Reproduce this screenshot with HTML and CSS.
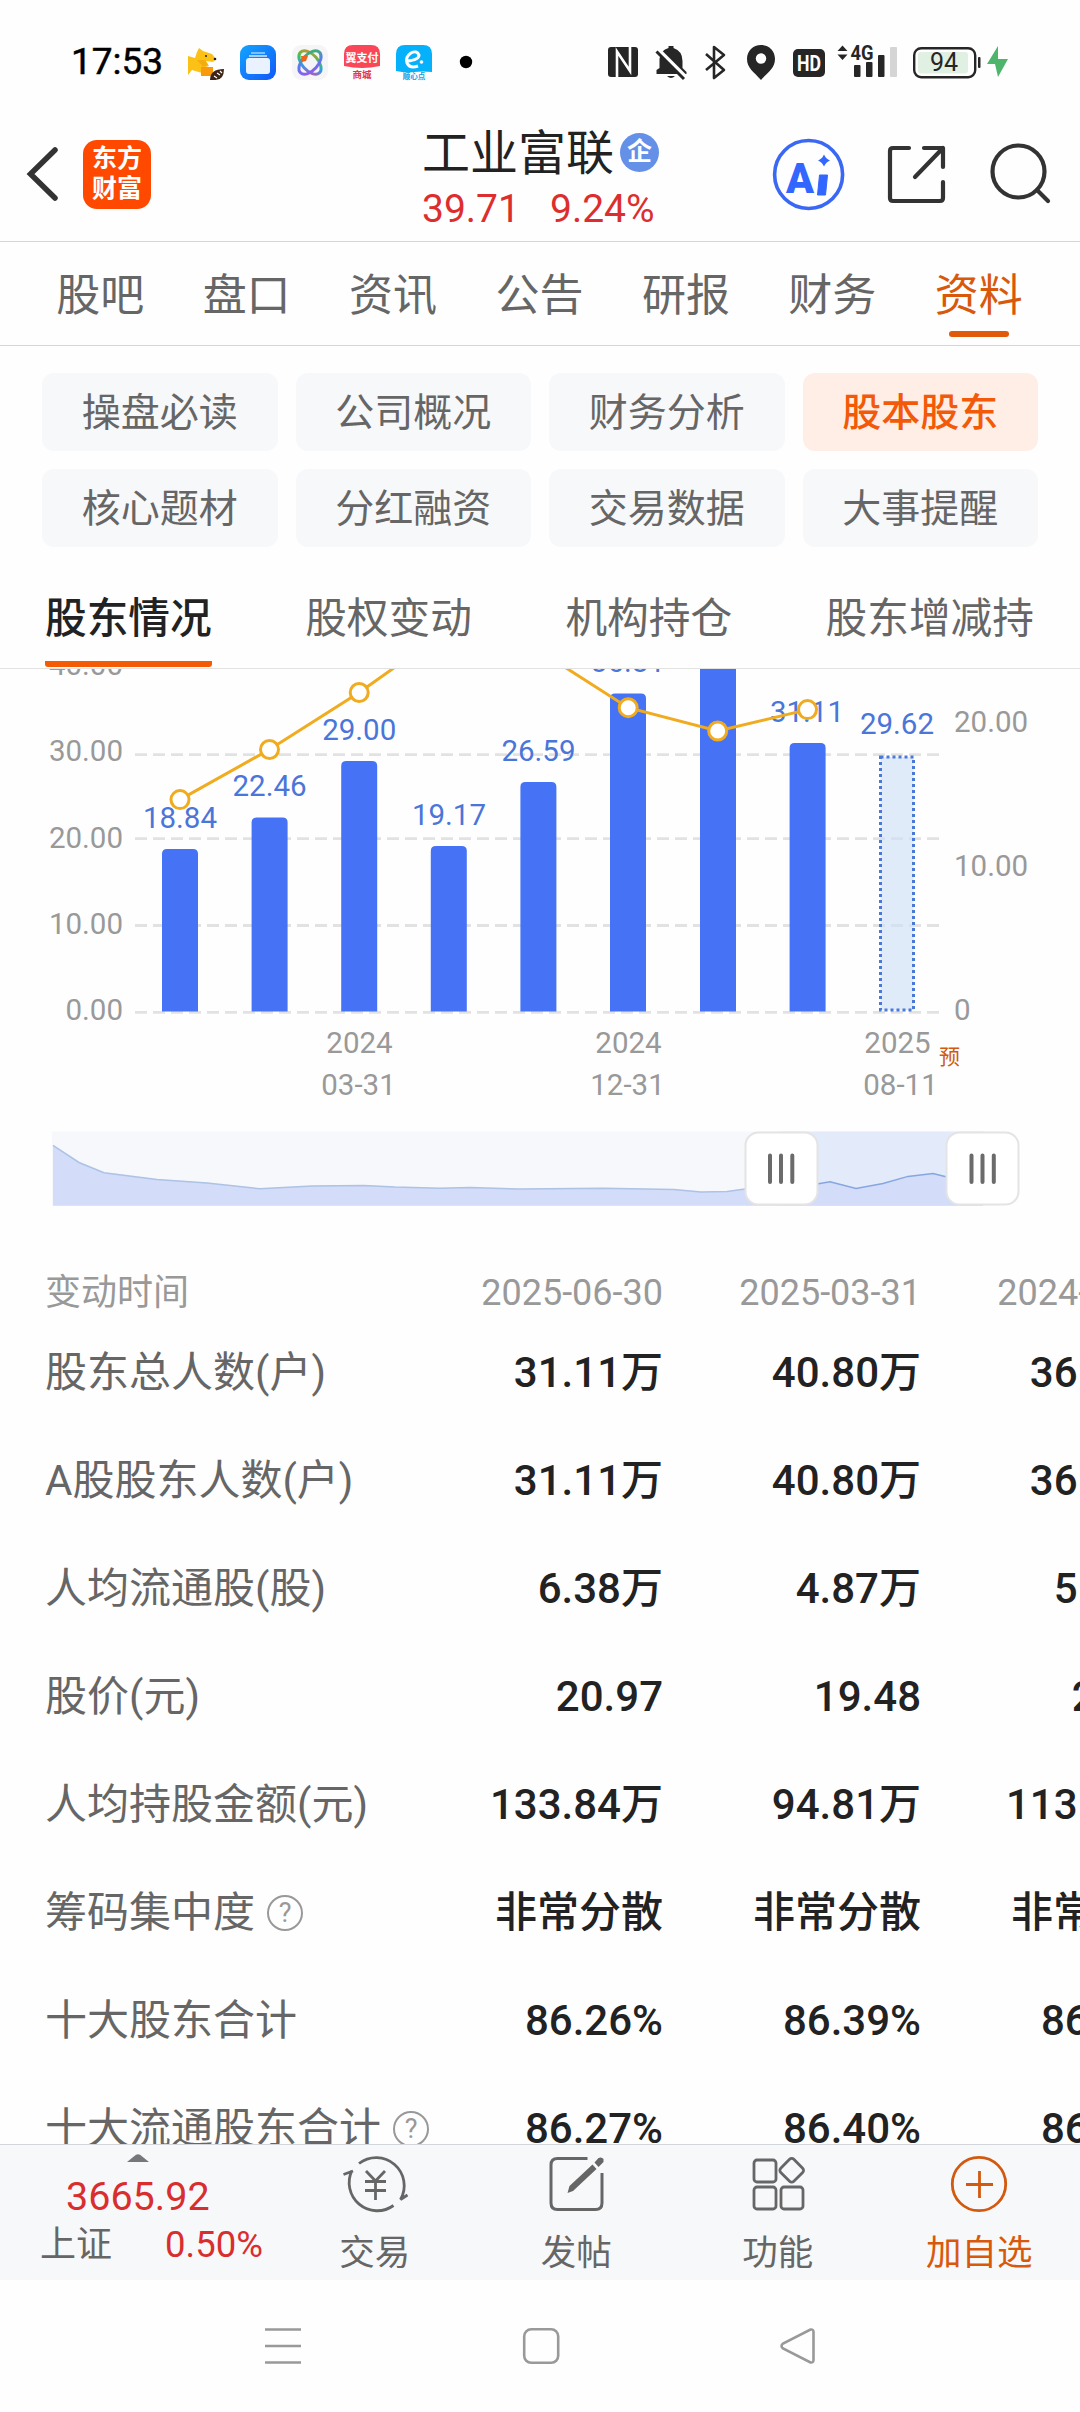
FILE: index.html
```html
<!DOCTYPE html>
<html lang="zh-CN">
<head>
    <meta charset="UTF-8">
    <meta name="viewport" content="width=device-width, initial-scale=1.0">
    <title>工业富联 - 股本股东</title>
    <link rel="stylesheet" href="styles.css">
</head>
<body>
    <div class="status">
        <span class="clock">17:53</span>
        <svg class="apps" width="288" height="40" viewBox="186 42 288 40">
            <defs>
                <linearGradient id="folder" x1="0" y1="0" x2="1" y2="1">
                    <stop offset="0" stop-color="#12a5ff"/><stop offset="1" stop-color="#1257f8"/>
                </linearGradient>
                <linearGradient id="rainbow" x1="0" y1="0" x2="1" y2="1">
                    <stop offset="0" stop-color="#f08a1c"/><stop offset=".4" stop-color="#3cc35a"/><stop offset=".65" stop-color="#2d9df0"/><stop offset="1" stop-color="#e0488c"/>
                </linearGradient>
                <linearGradient id="rainbow2" x1="0" y1="1" x2="1" y2="0">
                    <stop offset="0" stop-color="#a052f0"/><stop offset=".5" stop-color="#5a7af0"/><stop offset="1" stop-color="#38c04c"/>
                </linearGradient>
            </defs>
            <path d="M188 56 L195 58 L197 52 L199 48 L203 51 L212 54 L216 59 L213 62 L206 61 L209 66 L203 68 L202 73 L192 70 L188 75Z" fill="#fbc116"/>
            <path d="M197 60 L205 60 L208 65 L203 67Z" fill="#f5ac10"/>
            <circle cx="206" cy="56" r="1" fill="#222"/><circle cx="215" cy="59" r="1.3" fill="#222"/>
            <path d="M201 67h12v9h-12z" fill="#f99a0c"/>
            <path d="M210 80 Q210 69 224 69 Q224 81 214 80Z" fill="#3d2417"/>
            <path d="M214 76l3 2M217 73l3 2M220 71l2 2" stroke="#fff" stroke-width="1.2"/>
            <rect x="240" y="45" width="36" height="35" rx="9" fill="url(#folder)"/>
            <path d="M251 52h14v2h-14z" fill="#7dc0ff"/><path d="M249 55h18v2h-18z" fill="#a5d0ff"/>
            <rect x="246" y="58" width="24" height="16" rx="3" fill="#eaf2ff"/>
            <rect x="292" y="45" width="36" height="35" rx="9" fill="#f5f5f7"/>
            <g fill="none" stroke-width="3">
                <ellipse cx="310" cy="62.500" rx="14" ry="8" transform="rotate(48 310 62.500)" stroke="url(#rainbow)"/>
                <ellipse cx="310" cy="62.500" rx="14" ry="8" transform="rotate(-48 310 62.500)" stroke="url(#rainbow2)"/>
            </g>
            <path d="M301 56l7 0-2 5-4 1z" fill="#f0641c"/>
            <path d="M353 45h18q9 0 9 9v12q-18 4-36 0v-12q0-9 9-9z" fill="#fb4657"/>
            <text x="362" y="62" class="mini" font-size="11" fill="#fff">翼支付</text>
            <text x="362" y="78" class="mini" font-size="9.500" fill="#e5374a">商城</text>
            <path d="M405 45h18q9 0 9 9v18q-9-1-18 0-9 1-18-1v-17q0-9 9-9z" fill="#06b1fb"/>
            <path d="M407 61 Q419 60 419 55 Q417 50 411 53 Q405 57 407 63 Q410 69 418 66" fill="none" stroke="#fff" stroke-width="3"/>
            <circle cx="421.500" cy="62" r="1.800" fill="#fff"/>
            <text x="414" y="79" class="mini" font-size="7.500" fill="#06a1e8">顺心点</text>
            <circle cx="466" cy="62" r="6.200" fill="#000"/>
        </svg>
        <svg class="sys" width="410" height="40" viewBox="604 42 410 40">
            <g fill="#262626">
                <rect x="608" y="47" width="30" height="30" rx="3"/>
                <path d="M617 77V51.500L630 71V47" fill="none" stroke="#fff" stroke-width="2.600"/>
                <path d="M668.500 46h5v2q9 3 9 13v7l4 4v2h-30v-4l3-2v-9q1-9 9-11z"/>
                <path d="M667 76h8q-4 4-8 0z"/>
                <path d="M657 49L687 79" stroke="#fff" stroke-width="5"/>
                <path d="M656.500 51.500L684 79" stroke="#262626" stroke-width="3"/>
                <path d="M706 54l18 16-10 8V47l10 8-18 15" fill="none" stroke="#262626" stroke-width="2.600" stroke-linejoin="round"/>
                <path d="M761 45c8 0 14 6 14 14 0 9-7 13-14 21-7-8-14-12-14-21 0-8 6-14 14-14z"/>
                <circle cx="761" cy="58.500" r="5.200" fill="#fff"/>
                <rect x="793" y="49" width="32" height="28" rx="5"/>
                <path d="M842.500 45.500l5 5.500h-10zM842.500 60l5-5.500h-10z"/>
                <rect x="854" y="65" width="6.500" height="12" rx="1"/>
                <rect x="866" y="62" width="6.500" height="15" rx="1"/>
                <rect x="878" y="55" width="6.500" height="22" rx="1"/>
                <rect x="890" y="47" width="7" height="30" rx="1" fill="#d5d5d5"/>
                <rect x="978" y="57" width="2.500" height="11" rx="1"/>
            </g>
            <text x="809" y="70.500" class="mini" font-size="22" fill="#fff" textLength="24" lengthAdjust="spacingAndGlyphs">HD</text>
            <text x="862" y="60" class="mini" font-size="20" fill="#262626" textLength="23" lengthAdjust="spacingAndGlyphs">4G</text>
            <rect x="914.200" y="48.200" width="61" height="29" rx="7" fill="#fff" stroke="#262626" stroke-width="2.400"/>
            <rect x="918" y="52" width="50" height="21.500" rx="3" fill="#e0f0e2"/>
            <text x="944" y="71" class="battery">94</text>
            <path d="M998 46l-11 18h8l3 13 10-18h-10z" fill="#4fb56c"/>
        </svg>
    </div>

    <header class="header">
        <svg class="back" width="34" height="58" viewBox="0 0 34 58"><path d="M30 5L5.500 29L30 53" fill="none" stroke="#333" stroke-width="5.500" stroke-linecap="round"/></svg>
        <div class="logo"><span>东方</span><span>财富</span></div>
        <div class="stock">
            <div class="name">工业富联<span class="ent">企</span></div>
            <div class="price"><span>39.71</span><span>9.24%</span></div>
        </div>
        <svg class="tools" width="300" height="80" viewBox="770 134 300 80">
            <circle cx="808.600" cy="174.500" r="34" fill="none" stroke="#3a68f5" stroke-width="3.600"/>
            <text x="800" y="192.500" class="ai" textLength="28" lengthAdjust="spacingAndGlyphs">A</text>
            <path d="M819.500 175h8l-2 20h-8z" fill="#3366ff" stroke="#3366ff" stroke-linejoin="round"/>
            <path d="M824 154.500q2 4.500 6 6-4 1.500-6 6-2-4.500-6-6 4-1.500 6-6z" fill="#3366ff"/>
            <g fill="none" stroke="#333" stroke-width="4.200" stroke-linecap="round" stroke-linejoin="round">
                <path d="M909 148H893q-3 0-3 3V198q0 3 3 3H940q3 0 3-3V182M924 148H943V167M943 148L915 177"/>
                <circle cx="1018.500" cy="171.500" r="26"/>
                <path d="M1037 190L1048 201"/>
            </g>
        </svg>
    </header>

    <nav class="tabs">
        <span>股吧</span><span>盘口</span><span>资讯</span><span>公告</span><span>研报</span><span>财务</span><span class="on">资料</span>
    </nav>

    <div class="chips">
        <span>操盘必读</span><span>公司概况</span><span>财务分析</span><span class="on">股本股东</span>
        <span>核心题材</span><span>分红融资</span><span>交易数据</span><span>大事提醒</span>
    </div>

    <nav class="subtabs">
        <span class="on">股东情况</span><span>股权变动</span><span>机构持仓</span><span>股东增减持</span>
    </nav>

    <main class="content">
        <svg class="chart" width="1080" height="446" viewBox="0 669 1080 446">
            <g stroke="#e2e2e2" stroke-width="2.800" stroke-dasharray="12 6">
                <path d="M135 754.600H939"/><path d="M135 838.600H939"/><path d="M135 925.500H939"/><path d="M135 1012.300H939"/>
            </g>
            <g class="axis left">
                <text x="123" y="675">40.00</text>
                <text x="123" y="761">30.00</text>
                <text x="123" y="848">20.00</text>
                <text x="123" y="934">10.00</text>
                <text x="123" y="1020">0.00</text>
            </g>
            <g class="axis">
                <text x="954" y="732">20.00</text>
                <text x="954" y="876">10.00</text>
                <text x="954" y="1020">0</text>
            </g>
            <g class="bars">
                <path d="M162 1011.500V854q0-5 5-5h26q5 0 5 5V1011.500z"/>
                <path d="M251.600 1011.500V822.500q0-5 5-5h26q5 0 5 5V1011.500z"/>
                <path d="M341.200 1011.500V766q0-5 5-5h26q5 0 5 5V1011.500z"/>
                <path d="M430.800 1011.500V851q0-5 5-5h26q5 0 5 5V1011.500z"/>
                <path d="M520.400 1011.500V787q0-5 5-5h26q5 0 5 5V1011.500z"/>
                <path d="M610 1011.500V698.500q0-5 5-5h26q5 0 5 5V1011.500z"/>
                <path d="M700 1011.500V660h36V1011.500z"/>
                <path d="M789.600 1011.500V748q0-5 5-5h26q5 0 5 5V1011.500z"/>
            </g>
            <rect x="880.500" y="757" width="33" height="253" fill="#cfe0f7" fill-opacity=".65" stroke="#4a78d8" stroke-width="3" stroke-dasharray="3 3"/>
            <g class="values">
                <text x="180" y="827.500">18.84</text>
                <text x="269.600" y="796">22.46</text>
                <text x="359.200" y="739.600">29.00</text>
                <text x="449" y="824.700">19.17</text>
                <text x="538.500" y="761">26.59</text>
                <text x="628" y="671.500">36.81</text>
                <text x="807" y="722">31.11</text>
                <text x="897" y="733.700">29.62</text>
            </g>
            <g fill="#fff" stroke="#f0ab1e" stroke-width="3">
                <path d="M180 799.600L269.500 749.500L359.200 692.500L448.800 629L538.500 650.300L628.200 707.700L717.700 731L807.500 709.600" fill="none"/>
                <circle cx="180" cy="799.600" r="9"/>
                <circle cx="269.500" cy="749.500" r="9"/>
                <circle cx="359.200" cy="692.500" r="9"/>
                <circle cx="628.200" cy="707.700" r="9"/>
                <circle cx="717.700" cy="731" r="9"/>
                <circle cx="807.500" cy="709.600" r="9"/>
            </g>
            <g class="axis dates">
                <text x="359.500" y="1053">2024</text><text x="358.500" y="1094.700">03-31</text>
                <text x="628.500" y="1053">2024</text><text x="627.500" y="1094.700">12-31</text>
                <text x="897.500" y="1053">2025</text><text x="900.500" y="1094.700">08-11</text>
            </g>
            <text x="939" y="1064" class="forecast">预</text>
        </svg>

        <svg class="slider" width="1080" height="106" viewBox="0 1115 1080 106">
            <path d="M52 1131.500H1000V1205.700H52z" fill="#f7f8fb"/>
            <path d="M781 1131.500H983V1205.700H781z" fill="#e3eaf9"/>
            <path d="M53 1145.400L79 1162.500L104 1172.700L157 1179.600L207 1182.900L260 1188.800L312 1186.100L364 1185.500L395 1187.100L440 1188.200L470 1187.500L520 1189L603 1188.200L674 1189.600L701 1192L727 1191.400L745 1189L781 1190.400L817 1183.900L830 1181.800L856 1188.500L883 1183.400L908 1176.400L933 1173.500L945 1176.400L983 1184V1205.700H53z" fill="#d3dcf9"/>
            <path d="M53 1145.400L79 1162.500L104 1172.700L157 1179.600L207 1182.900L260 1188.800L312 1186.100L364 1185.500L395 1187.100L440 1188.200L470 1187.500L520 1189L603 1188.200L674 1189.600L701 1192L727 1191.400L745 1189" fill="none" stroke="#adc2e4" stroke-width="1.500"/>
            <path d="M781 1190.400L817 1183.900L830 1181.800L856 1188.500L883 1183.400L908 1176.400L933 1173.500L947 1177" fill="none" stroke="#86a6e2" stroke-width="1.500"/>
            <g fill="#fff" stroke="#e4e4e6" stroke-width="2">
                <rect x="745.500" y="1132.500" width="72" height="72" rx="13"/>
                <rect x="946.500" y="1132.500" width="72" height="72" rx="13"/>
            </g>
            <path d="M770 1155.500V1182M781 1155.500V1182M792.300 1155.500V1182M971.500 1155.500V1182M982.500 1155.500V1182M993.800 1155.500V1182" stroke="#6b6b6b" stroke-width="4" stroke-linecap="round"/>
        </svg>

        <div class="table">
            <div class="row head"><span class="label">变动时间</span><b>2025-06-30</b><b>2025-03-31</b><b>2024-12-31</b></div>
            <div class="row"><span class="label">股东总人数(户)</span><b>31.11万</b><b>40.80万</b><b>36.81万</b></div>
            <div class="row"><span class="label">A股股东人数(户)</span><b>31.11万</b><b>40.80万</b><b>36.81万</b></div>
            <div class="row"><span class="label">人均流通股(股)</span><b>6.38万</b><b>4.87万</b><b>5.39万</b></div>
            <div class="row"><span class="label">股价(元)</span><b>20.97</b><b>19.48</b><b>21.10</b></div>
            <div class="row"><span class="label">人均持股金额(元)</span><b>133.84万</b><b>94.81万</b><b>113.81万</b></div>
            <div class="row"><span class="label">筹码集中度<i>?</i></span><b>非常分散</b><b>非常分散</b><b>非常分散</b></div>
            <div class="row"><span class="label">十大股东合计</span><b>86.26%</b><b>86.39%</b><b>86.41%</b></div>
            <div class="row"><span class="label">十大流通股东合计<i>?</i></span><b>86.27%</b><b>86.40%</b><b>86.42%</b></div>
        </div>
    </main>

    <footer class="bottom">
        <div class="index">
            <svg width="22" height="8" viewBox="0 0 22 8"><path d="M0 8L9 .800q2-1.200 4 0L22 8z" fill="#77777b"/></svg>
            <strong>3665.92</strong>
            <div class="change"><span>上证</span><em>0.50%</em></div>
        </div>
        <div class="action">
            <svg width="70" height="62" viewBox="340 2153 70 62" fill="none" stroke="#666" stroke-width="2.800">
                <path d="M359 2163.500A28 28 0 0 1 400.500 2199.500L407.500 2195M393.500 2205.500A28 28 0 0 1 352 2170.500M343.500 2174.500L353 2171"/>
                <path d="M366 2171L375.500 2181L385 2171M375.500 2181V2200M365 2181.500H386M365 2190.500H386"/>
            </svg>
            <span>交易</span>
        </div>
        <div class="action">
            <svg width="70" height="62" viewBox="541.500 2153 70 62">
                <path d="M588 2158.500H558q-6.500 0-6.500 6.500V2203q0 6.500 6.500 6.500H596q6.500 0 6.500-6.500V2173" fill="none" stroke="#666" stroke-width="3"/>
                <path d="M568 2193L570 2186L593 2164.500L597 2169L573.500 2191zM595 2162.500L599 2158q3-1.500 5 1v3l-5 5z" fill="#666"/>
            </svg>
            <span>发帖</span>
        </div>
        <div class="action">
            <svg width="70" height="62" viewBox="743 2153 70 62" fill="none" stroke="#666" stroke-width="2.800">
                <rect x="754" y="2160" width="22" height="22" rx="3"/>
                <rect x="754" y="2187" width="22" height="22" rx="3"/>
                <rect x="781" y="2187" width="22" height="22" rx="3"/>
                <rect x="782.500" y="2161" width="18.500" height="18.500" rx="3" transform="rotate(45 791.700 2170.200)"/>
            </svg>
            <span>功能</span>
        </div>
        <div class="action add">
            <svg width="70" height="62" viewBox="944 2153 70 62" fill="none" stroke="#d2590f" stroke-width="2.800">
                <circle cx="979" cy="2184" r="26.700"/><path d="M966 2184.500H993M979.500 2171V2198"/>
            </svg>
            <span>加自选</span>
        </div>
    </footer>

    <div class="sysnav">
        <svg width="40" height="40" viewBox="0 0 40 40"><path d="M2 3.500H38M2 20H38M2 36.500H38"/></svg>
        <svg width="40" height="40" viewBox="0 0 40 40"><rect x="3.200" y="3.300" width="34" height="33.500" rx="7"/></svg>
        <svg width="40" height="40" viewBox="0 0 40 40"><path d="M32.500 3.500Q35.500 3 35.500 6V34Q35.500 37 32.500 36.500L5 22.500Q2 20 5 17.500Z"/></svg>
    </div>
</body>
</html>
```
FILE: styles.css
```css
* {
    box-sizing: border-box;
}

body {
    margin: 0;
    width: 1080px;
    height: 2412px;
    overflow: hidden;
    background: #fefefe;
    color: #666;
    font-family: Roboto, "Noto Sans CJK SC", sans-serif;
    display: flex;
    flex-direction: column;
}

svg {
    display: block;
    flex: none;
}

/* status bar */
.status {
    height: 124px;
    padding: 0 66px 0 71px;
    display: flex;
    align-items: center;
}

.clock {
    width: 115px;
    font-size: 37px;
    line-height: 40px;
    color: #000;
    -webkit-text-stroke: 0.5px #000;
}

.sys {
    margin-left: auto;
}

.mini {
    font-weight: 700;
    text-anchor: middle;
}

.battery {
    font-size: 25px;
    fill: #262626;
    text-anchor: middle;
}

/* header */
.header {
    height: 118px;
    border-bottom: 1px solid #d6d6d8;
    display: flex;
    align-items: flex-start;
}

.back {
    margin: 21px 0 0 25px;
}

.logo {
    width: 68px;
    height: 69px;
    margin: 16px 0 0 24px;
    padding-top: 4px;
    border-radius: 14px;
    background: #ff4800;
    color: #fff;
    font-size: 25px;
    font-weight: 700;
    line-height: 30px;
    display: flex;
    flex-direction: column;
    align-items: center;
}

.stock {
    width: 240px;
    margin-left: 271px;
}

.name {
    height: 58px;
    padding-top: 2px;
    font-size: 48px;
    line-height: 56px;
    color: #222;
    display: flex;
    align-items: center;
}

.ent {
    width: 39px;
    height: 39px;
    margin: -4px 0 0 6px;
    border-radius: 50%;
    background: #6590e8;
    color: #fff;
    font-size: 25px;
    font-weight: 700;
    line-height: 37px;
    text-align: center;
}

.price {
    display: flex;
    gap: 30px;
    font-size: 39px;
    line-height: 44px;
    color: #dc2e2e;
    margin-top: 5px;
    white-space: nowrap;
}

.tools {
    margin: 10px 0 0 108px;
}

.ai {
    font-size: 43px;
    font-weight: 900;
    fill: #3366ff;
    text-anchor: middle;
}

/* tabs */
.tabs {
    height: 104px;
    padding: 0 28px 0 27px;
    border-bottom: 1px solid #d6d6d8;
    display: flex;
}

.tabs span {
    flex: 1;
    height: 95px;
    font-size: 44px;
    line-height: 108px;
    text-align: center;
    position: relative;
}

.tabs .on {
    color: #d9590c;
}

.tabs .on::after {
    content: "";
    position: absolute;
    left: 50%;
    bottom: 0;
    width: 60px;
    height: 6px;
    margin-left: -30px;
    border-radius: 3px;
    background: #e15a0a;
}

.chips {
    padding: 27px 42px 0;
    display: grid;
    grid-template-columns: repeat(4, 1fr);
    gap: 18px;
}

.chips span {
    height: 78px;
    border-radius: 12px;
    background: #f7f8fa;
    font-size: 39px;
    line-height: 80px;
    text-align: center;
}

.chips .on {
    background: #ffeee6;
    color: #f25a0a;
    font-weight: 500;
}

.subtabs {
    height: 122px;
    padding: 20px 46px 0 45px;
    border-bottom: 1px solid #e2e2e2;
    display: flex;
    justify-content: space-between;
    font-size: 41.7px;
    line-height: 103px;
}

.subtabs span {
    height: 100px;
}

.subtabs .on {
    color: #222;
    font-weight: 500;
    border-bottom: 6px solid #f55a05;
    border-radius: 3px;
}

/* chart */
.content {
    height: 1475px;
    overflow: hidden;
}

.axis {
    font-size: 29.5px;
    fill: #999;
}

.left {
    text-anchor: end;
}

.dates,
.values {
    text-anchor: middle;
}

.values {
    font-size: 29.5px;
    fill: #4a75d9;
}

.bars {
    fill: #4673f5;
}

.forecast {
    font-size: 21px;
    fill: #d2590f;
}

/* shareholder table */
.table {
    width: 1179px;
    margin-top: 46px;
    padding-left: 45px;
}

.row {
    height: 108px;
    display: flex;
    align-items: center;
    font-size: 42px;
    line-height: 60px;
}

.row .label {
    width: 360px;
    display: flex;
    align-items: center;
    white-space: nowrap;
}

.row b {
    width: 258px;
    text-align: right;
    font-weight: 500;
    color: #222;
}

.head {
    height: 52px;
    font-size: 36px;
    color: #999;
}

.head b {
    font-weight: 400;
    color: #999;
}

.row i {
    flex: none;
    width: 36px;
    height: 36px;
    margin-left: 12px;
    border: 2px solid #999;
    border-radius: 50%;
    color: #999;
    font-size: 27px;
    font-style: normal;
    line-height: 33px;
    text-align: center;
}

/* bottom bar */
.bottom {
    height: 136px;
    border-top: 1px solid #d2d5da;
    background: #f7f8fa;
    display: flex;
}

.index {
    width: 274px;
    padding: 9px 0 0 40px;
    color: #d92e2e;
}

.index svg {
    margin-left: 87px;
}

.index strong {
    display: block;
    margin: 12px 0 0 26px;
    font-size: 39.5px;
    font-weight: 400;
    line-height: 46px;
}

.change {
    display: flex;
    align-items: center;
    justify-content: space-between;
    width: 223px;
    line-height: 50px;
}

.change span {
    font-size: 36px;
    color: #666;
}

.change em {
    font-size: 36.5px;
    font-style: normal;
}

.action {
    width: 201.5px;
    padding-top: 8px;
    display: flex;
    flex-direction: column;
    align-items: center;
    font-size: 35.5px;
    line-height: 50px;
}

.action span {
    margin-top: 13px;
}

.add {
    color: #d9590c;
}

.sysnav {
    height: 132px;
    padding: 46px 262px 0 263px;
    display: flex;
    justify-content: space-between;
}

.sysnav svg {
    fill: none;
    stroke: #999;
    stroke-width: 2.6;
}
```
